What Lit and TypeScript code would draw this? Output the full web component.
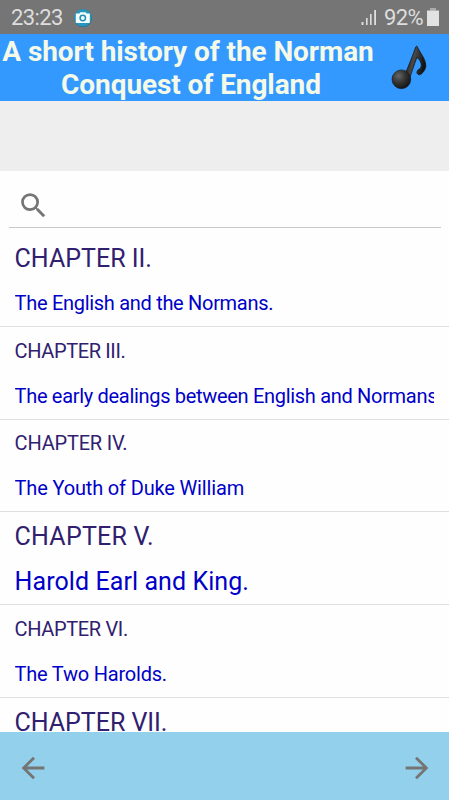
import { LitElement, html, css } from "lit";
import { customElement, property } from "lit/decorators.js";
import { classMap } from "lit/directives/class-map.js";
import { styleMap } from "lit/directives/style-map.js";

interface Chapter {
  heading: string;
  title: string;
  bigHeading?: boolean;
  bigTitle?: boolean;
  /** letter spacing in px of the heading and of the title */
  tracking: [number, number];
}

const CHAPTERS: Chapter[] = [
  { heading: "CHAPTER II.", title: "The English and the Normans.", bigHeading: true, tracking: [0, -0.3] },
  { heading: "CHAPTER III.", title: "The early dealings between English and Normans.", tracking: [-0.38, -0.31] },
  { heading: "CHAPTER IV.", title: "The Youth of Duke William", tracking: [-0.2, -0.16] },
  { heading: "CHAPTER V.", title: "Harold Earl and King.", bigHeading: true, bigTitle: true, tracking: [0.22, 0.08] },
  { heading: "CHAPTER VI.", title: "The Two Harolds.", tracking: [-0.36, -0.22] },
  { heading: "CHAPTER VII.", title: "The Coming of Duke William", bigHeading: true, tracking: [-0.04, 0] },
];

@customElement("chapter-row")
export class ChapterRow extends LitElement {
  @property({ attribute: false }) chapter!: Chapter;

  static styles = css`
    :host { display: block; flex: none; box-sizing: border-box; height: 92.75px; padding: 1.9px 15px 0 14.6px; border-bottom: 1px solid #dedede; }
    .line { height: 45px; line-height: 45px; font-size: 20px; white-space: nowrap; overflow: hidden; }
    .heading { color: #30206f; }
    .title { color: #0000c8; }
    .big { font-size: 25px; }
  `;

  render() {
    const c = this.chapter;
    return html`
      <div class=${classMap({ line: true, heading: true, big: !!c.bigHeading })} style=${styleMap({ letterSpacing: `${c.tracking[0]}px` })}>${c.heading}</div>
      <div class=${classMap({ line: true, title: true, big: !!c.bigTitle })} style=${styleMap({ letterSpacing: `${c.tracking[1]}px` })}>${c.title}</div>
    `;
  }
}

@customElement("app-root")
export class AppRoot extends LitElement {
  static styles = css`
    :host { display: flex; flex-direction: column; width: 449px; height: 800px; overflow: hidden; background: #fefefe; font-family: Roboto, "Liberation Sans", sans-serif; }
    svg { display: block; flex: none; }
    .status { flex: none; height: 34px; box-sizing: border-box; display: flex; align-items: center; padding: 1px 10px 0 11px; background: #757575; color: #dedede; font-size: 22px; line-height: 34px; }
    .clock { width: 63px; letter-spacing: -0.6px; }
    .space { flex: 1; }
    .percent { margin: 0 4px 0 7px; letter-spacing: -0.6px; }
    .battery { margin-bottom: 1px; }
    .header { flex: none; height: 67px; display: flex; background: #3399ff; }
    .name { width: 382px; margin: 0; padding-top: 1px; flex: none; box-sizing: border-box; text-align: center; color: #f5f9e8; font-size: 28px; font-weight: 700; line-height: 33px; letter-spacing: -0.08px; white-space: nowrap; }
    .name span { display: block; }
    .first { width: 376px; }
    .note { margin: 9px 0 0 7px; }
    .band { flex: none; height: 70px; background: #eeeeee; }
    .search { flex: none; height: 57px; box-sizing: border-box; margin: 0 8px 0 9px; padding: 18px 0 0 7.6px; border-bottom: 1px solid #c8c8c8; }
    .list { flex: 1; min-height: 0; overflow: hidden; display: flex; flex-direction: column; padding-top: 6px; }
    .nav { flex: none; height: 68px; display: flex; align-items: center; justify-content: space-between; box-sizing: border-box; padding: 3px 15px 0 16px; background: #92d0ec; }
  `;

  render() {
    return html`
      <div class="status">
        <span class="clock">23:23</span>
        <svg width="18" height="18" viewBox="0 0 18 18">
          <circle cx="9" cy="9.2" r="8.8" fill="#146f90" />
          <circle cx="8.8" cy="8.8" r="8.7" fill="#2596bc" />
          <path d="M1.8 4.6h3.6l1-1.4h5.2l1 1.4h3.2v9.4H1.8z" fill="#f4ffff" />
          <circle cx="8.8" cy="9" r="2.7" fill="#f4ffff" stroke="#258eb2" stroke-width="1.5" />
        </svg>
        <span class="space"></span>
        <svg width="16" height="17" viewBox="0 0 16 17" fill="#dedede">
          <path d="M.5 13h2v3h-2zM5 9h1.600v7H5zM9 5h1.600v11H9zM13.200 1h1.800v15h-1.800z" />
        </svg>
        <span class="percent">92%</span>
        <svg class="battery" width="12" height="18" viewBox="0 0 12 18" fill="#e2e2e2">
          <path d="M0 2.500h12V18H0z" /><path d="M3 0h6v2.500H3z" opacity=".5" />
        </svg>
      </div>
      <div class="header">
        <h1 class="name"><span class="first">A short history of the Norman</span><span>Conquest of England</span></h1>
        <svg class="note" width="40" height="48" viewBox="0 0 40 48">
          <defs>
            <radialGradient id="head" cx=".35" cy=".32" r=".75">
              <stop offset="0" stop-color="#666" /><stop offset=".5" stop-color="#333" /><stop offset="1" stop-color="#111" />
            </radialGradient>
            <linearGradient id="stem" x1="0" y1="0" x2="1" y2="0.3">
              <stop offset="0" stop-color="#151515" /><stop offset=".5" stop-color="#494949" /><stop offset="1" stop-color="#111" />
            </linearGradient>
          </defs>
          <path d="M28.2 3.5C30.7 9.5 36.6 15.5 36.8 22.5C37 26 33.5 31.3 30.3 31.8C26.8 31.3 27.3 27 31.2 25.6C34.2 21.8 30.5 15.8 27.8 14.5C24.8 22.5 22 31.5 19.6 38L15.6 32.2C19.8 22.6 23.6 13 26.8 3.8Q27.5 2.7 28.2 3.5Z" fill="url(#stem)" stroke="#151515" stroke-width=".8" />
          <circle cx="12.4" cy="36.3" r="9.4" fill="url(#head)" stroke="#151515" stroke-width=".6" />
        </svg>
      </div>
      <div class="band"></div>
      <div class="search">
        <svg width="33" height="33" viewBox="0 0 24 24" fill="#757575">
          <path d="M15.5 14h-.79l-.28-.27A6.47 6.47 0 0 0 16 9.5 6.5 6.5 0 1 0 9.5 16c1.61 0 3.09-.59 4.23-1.57l.27.28v.79l5 4.99L20.49 19l-4.99-5zm-6 0C7.01 14 5 11.99 5 9.5S7.01 5 9.5 5 14 7.01 14 9.5 11.99 14 9.5 14z" />
        </svg>
      </div>
      <div class="list">
        ${CHAPTERS.map((c) => html`<chapter-row .chapter=${c}></chapter-row>`)}
      </div>
      <div class="nav">
        <svg width="34" height="34" viewBox="0 0 24 24" fill="#757575"><path d="M20 11H7.83l5.59-5.59L12 4l-8 8 8 8 1.41-1.41L7.83 13H20v-2z" /></svg>
        <svg width="34" height="34" viewBox="0 0 24 24" fill="#757575"><path d="M12 4l-1.41 1.41L16.17 11H4v2h12.17l-5.58 5.59L12 20l8-8z" /></svg>
      </div>
    `;
  }
}
